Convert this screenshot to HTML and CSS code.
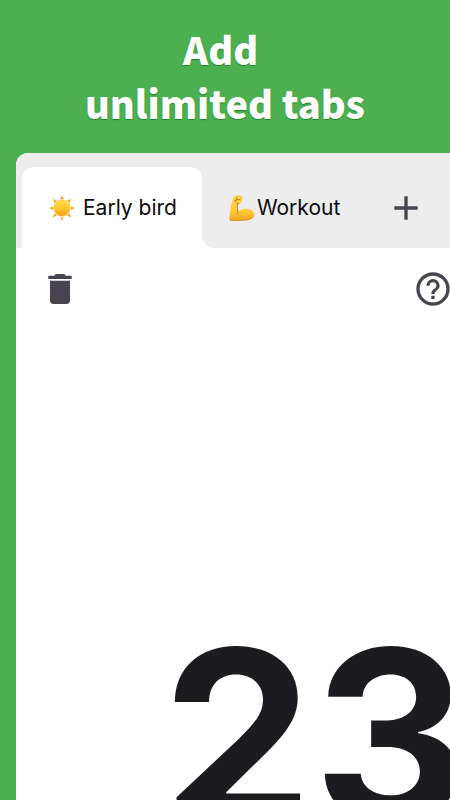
FILE: index.html
```html
<!DOCTYPE html>
<html lang="en">
<head>
<meta charset="utf-8">
<meta name="viewport" content="width=device-width, initial-scale=1">
<title>Add unlimited tabs</title>
<link rel="stylesheet" href="styles.css">
</head>
<body>
<main class="promo">
  <h1 class="headline">Add&nbsp;<br>unlimited tabs</h1>
  <section class="panel">
    <nav class="tabs">
      <button class="tab tab-active" type="button">
        <svg class="emoji" viewBox="0 0 26 26" aria-hidden="true">
          <defs>
            <linearGradient id="sun-ray" x1="0" y1="0" x2="0" y2="1"><stop offset="0" stop-color="#fbd044"/><stop offset="1" stop-color="#e99a1c"/></linearGradient>
            <linearGradient id="sun-disc" x1="0" y1="0" x2="0" y2="1"><stop offset="0" stop-color="#ffe04a"/><stop offset=".55" stop-color="#ffc42c"/><stop offset="1" stop-color="#f59a12"/></linearGradient>
          </defs>
          <g fill="url(#sun-ray)">
            <path d="M13 0l1.900 4.200h-3.800z"/><path d="M13 26l1.900-4.200h-3.800z"/>
            <path d="M0 13l4.200-1.900v3.800z"/><path d="M26 13l-4.200-1.900v3.800z"/>
            <path d="M3.800 3.800l4.400 1.700-2.700 2.700z"/><path d="M22.200 3.800l-4.400 1.700 2.700 2.700z"/>
            <path d="M3.800 22.200l4.400-1.700-2.700-2.700z"/><path d="M22.200 22.200l-4.400-1.700 2.700-2.700z"/>
          </g>
          <circle cx="13" cy="13" r="8" fill="url(#sun-disc)" stroke="#f3b02c" stroke-width=".5"/>
        </svg>
        <span>Early bird</span>
      </button>
      <button class="tab" type="button">
        <svg class="emoji" viewBox="0 0 26 26" aria-hidden="true">
          <defs>
            <linearGradient id="arm" x1="0" y1="0" x2="0" y2="1"><stop offset="0" stop-color="#ffd650"/><stop offset=".65" stop-color="#ffc938"/><stop offset="1" stop-color="#eda41f"/></linearGradient>
          </defs>
          <path fill="url(#arm)" d="M5.300 1.600C6.800.2 10 0 11.900.6c1.300.4 1.800 1.400 1.500 2.700l-.7 3.200c-.3 1.400-1.200 2.200-2.600 2.300l-1 .2c-.6 2.700-.5 5.500.3 8 2-2.300 4.700-3.300 7.600-3.200 4.700.1 8.300 2.500 8.400 5.600.1 3.700-4.300 6.100-10.400 6.200-4.300.1-9.400.5-13.300-.1-.8-.1-1.200-.7-1.200-1.500C.7 16.300 2 10 3.700 4.600c.3-1.200.8-2.200 1.600-3z"/>
          <path fill="none" stroke="#b87516" stroke-width=".8" stroke-linecap="round" d="M5.300 5.100c.9 1.200 2.300.5 2.700-.6M8 4.500c-1.200-.8-1-2.200.2-2.500M8 4.500c1.700.8 2.900.3 3.700-.8M6.100 6.300c1 1.800 2.300 2.400 3.800 2.300M8.700 9.200c-.7 2.900-.3 5.700.6 8.100-.7.700-1.100 1.500-1.300 2.300"/>
          <path fill="none" stroke="#d28b1d" stroke-width=".8" stroke-linecap="round" d="M1.300 25.100c4.200.6 8.700.2 13 .1 3.600-.1 6.800-.9 8.800-2.500"/>
        </svg>
        <span>Workout</span>
      </button>
      <button class="icon-button add" type="button" aria-label="Add tab">
        <svg class="icon" viewBox="0 0 24 24" aria-hidden="true"><path d="M19 13h-6v6h-2v-6H5v-2h6V5h2v6h6z"/></svg>
      </button>
    </nav>
    <div class="toolbar">
      <button class="icon-button" type="button" aria-label="Delete tab">
        <svg class="icon" viewBox="0 0 24 24" aria-hidden="true"><path d="M6 19c0 1.100.9 2 2 2h8c1.100 0 2-.9 2-2V7H6zM19 4h-3.500l-1-1h-5l-1 1H5v2h14z"/></svg>
      </button>
      <button class="icon-button" type="button" aria-label="Help">
        <svg class="icon" viewBox="0 0 24 24" aria-hidden="true"><path d="M11 18h2v-2h-2zM12 2a10 10 0 1 0 0 20 10 10 0 0 0 0-20zm0 18a8 8 0 1 1 0-16 8 8 0 0 1 0 16zm0-14a4 4 0 0 0-4 4h2a2 2 0 1 1 4 0c0 2-3 1.750-3 5h2c0-2.250 3-2.500 3-5a4 4 0 0 0-4-4z"/></svg>
      </button>
    </div>
    <div class="count">23</div>
  </section>
</main>
</body>
</html>
```
FILE: styles.css
```css
* {
  box-sizing: border-box;
}

body {
  margin: 0;
  overflow: hidden;
  background: #4caf50;
  font-family: Inter, "Liberation Sans", sans-serif;
}

.promo {
  display: flex;
  flex-direction: column;
  height: 100vh;
  overflow: hidden;
}

.headline {
  flex: none;
  margin: 0;
  padding: 22px 0 23px;
  color: #fff;
  font: 900 38px/54px "Noto Sans CJK JP", "Noto Sans", sans-serif;
  text-align: center;
  text-shadow: 0 1px 1px rgba(0, 110, 0, .6);
}

.panel {
  flex: 1;
  min-height: 0;
  margin-left: 16px;
  overflow: hidden;
  background: #fff;
  border-top-left-radius: 12px;
}

.tabs {
  display: flex;
  padding: 14px 0 0 6px;
  background: #ededed;
}

button {
  padding: 0;
  border: 0;
  background: none;
  color: #0b0b0d;
  font: inherit;
}

.tab {
  position: relative;
  display: flex;
  flex: none;
  align-items: center;
  gap: 2px;
  height: 81px;
  padding: 0 25px 0 27px;
  font-size: 21px;
  line-height: 28px;
  white-space: nowrap;
}

.tab-active {
  gap: 8px;
  background: #fff;
  border-radius: 12px 12px 0 0;
}

.tab-active::after {
  content: "";
  position: absolute;
  left: 100%;
  bottom: 0;
  width: 12px;
  height: 12px;
  background: radial-gradient(circle at 100% 0, #ededed 12px, #fff 12px);
}

.emoji {
  flex: none;
  width: 26px;
  height: 26px;
}

.icon-button {
  display: flex;
  flex: none;
  align-items: center;
}

.add {
  margin-left: 21px;
}

.icon {
  width: 40px;
  height: 40px;
  fill: #47434f;
}

.toolbar {
  display: flex;
  justify-content: space-between;
  margin-right: -3px;
  padding: 21px 0 0 24px;
}

.count {
  margin-top: 282px;
  padding-left: 146px;
  color: #1c1b1f;
  font-size: 240px;
  font-weight: 700;
  line-height: 290px;
}
```
